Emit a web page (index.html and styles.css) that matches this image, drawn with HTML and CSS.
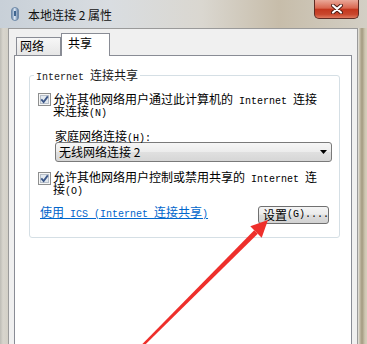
FILE: index.html
```html
<!DOCTYPE html>
<html lang="zh-CN">
<head>
<meta charset="utf-8">
<title>本地连接 2 属性</title>
<link rel="stylesheet" href="styles.css">
</head>
<body>
<div class="window">
  <div class="titlebar">
    <svg class="ticon" width="8" height="14" viewBox="0 0 8 14">
      <defs>
        <linearGradient id="tg" x1="0" x2="1" y1="0" y2="0">
          <stop offset="0" stop-color="#5d7fa6"/>
          <stop offset="0.45" stop-color="#dfe9f5"/>
          <stop offset="1" stop-color="#4d6e95"/>
        </linearGradient>
      </defs>
      <rect x="0.5" y="0.5" width="7" height="13" rx="3.5" fill="url(#tg)" stroke="#6f8aa8"/>
      <rect x="3" y="4" width="2" height="5" fill="#3f6590"/>
    </svg>
    <span class="title">本地连接 2 属性</span>
    <div class="close">
      <svg width="12" height="10" viewBox="0 0 12 10">
        <path d="M2 1.5 L10 8.5 M10 1.5 L2 8.5" stroke="#4a1a12" stroke-width="4" stroke-linecap="round"/>
        <path d="M2 1.5 L10 8.5 M10 1.5 L2 8.5" stroke="#ffffff" stroke-width="2.2" stroke-linecap="round"/>
      </svg>
    </div>
  </div>
  <div class="frame">
    <div class="client">
      <div class="tabs">
        <div class="tab">网络</div>
        <div class="tab active">共享</div>
      </div>
      <div class="panel">
        <div class="group">
          <div class="legend"><span class="m">Internet </span>连接共享</div>
          <div class="check-row">
            <svg class="cb" width="13" height="13" viewBox="0 0 13 13">
              <rect x="0.5" y="0.5" width="12" height="12" fill="#f6f6f6" stroke="#8e8f8f"/>
              <rect x="2.5" y="2.5" width="8" height="8" fill="#e3e9ef" stroke="#b7bfc9"/>
              <path d="M3.3 6.3 L5.6 9 L9.8 3.4" fill="none" stroke="#3b5688" stroke-width="1.8"/>
            </svg>
            <div class="label">允许其他网络用户通过此计算机的<span class="m"> Internet </span>连接<br>来连接<span class="m">(N)</span></div>
          </div>
          <div class="field-label">家庭网络连接<span class="m">(H):</span></div>
          <div class="combo">
            <span>无线网络连接 2</span>
            <svg class="carrow" width="7" height="4" viewBox="0 0 7 4"><path d="M0 0 H7 L3.5 4 Z" fill="#000"/></svg>
          </div>
          <div class="check-row second">
            <svg class="cb" width="13" height="13" viewBox="0 0 13 13">
              <rect x="0.5" y="0.5" width="12" height="12" fill="#f6f6f6" stroke="#8e8f8f"/>
              <rect x="2.5" y="2.5" width="8" height="8" fill="#e3e9ef" stroke="#b7bfc9"/>
              <path d="M3.3 6.3 L5.6 9 L9.8 3.4" fill="none" stroke="#3b5688" stroke-width="1.8"/>
            </svg>
            <div class="label">允许其他网络用户控制或禁用共享的<span class="m"> Internet </span>连<br>接<span class="m">(O)</span></div>
          </div>
          <div class="action-row">
            <a class="link" href="#">使用<span class="m"> ICS (Internet </span>连接共享<span class="m">)</span></a>
            <div class="btn">设置<span class="m">(G)....</span></div>
          </div>
        </div>
      </div>
    </div>
  </div>
  <svg class="arrow" width="367" height="344" viewBox="0 0 367 344">
    <polygon points="141.2,345.2 142.9,346.9 257.8,233.8 254.2,230.2" fill="#ee2f2b"/>
    <polygon points="268,220 250.3,226.3 261.7,237.7" fill="#ee2f2b"/>
  </svg>
</div>
</body>
</html>
```
FILE: styles.css
```css
* { box-sizing: border-box; }
html, body { margin: 0; padding: 0; }
body {
  width: 367px;
  height: 344px;
  overflow: hidden;
  font-family: "Noto Sans CJK SC", "Noto Sans", sans-serif;
  font-size: 12px;
  line-height: 12px;
  color: #000;
}
.m {
  font-family: "Liberation Mono", monospace;
  font-size: 10px;
  line-height: 0;
  white-space: pre;
}
.window {
  position: relative;
  width: 367px;
  height: 344px;
  display: flex;
  flex-direction: column;
  overflow: hidden;
  background: #d4d1c8;
}
.titlebar {
  height: 28px;
  flex: none;
  display: flex;
  align-items: flex-start;
  background: linear-gradient(90deg, #c8d0d8 0%, #d9dde1 30%, #dad7d0 55%, #c7bdaa 76%, #d3cfc5 100%);
}
.ticon { margin: 7px 0 0 11px; flex: none; }
.title {
  margin: 9px 0 0 9px;
  color: #111;
  white-space: nowrap;
}
.close {
  margin-left: auto;
  margin-right: 8px;
  width: 45px;
  height: 19px;
  border: 1px solid #5e2b23;
  border-top: none;
  border-radius: 0 0 5px 5px;
  background: linear-gradient(#eaa898, #d9664f 45%, #c3371e 52%, #c9472d 80%, #de7a5f);
  display: flex;
  align-items: center;
  justify-content: center;
}
.frame {
  flex: 1;
  display: flex;
  padding: 0 9px 0 8px;
  background: linear-gradient(90deg, #bdbcb5 0px, #d8d5cd 3px, #d4d1c8 7px, #d4d1c8 calc(100% - 9px), #e6e5e1 calc(100% - 9px), #c2baa4 calc(100% - 7px), #a39a80 calc(100% - 5px), #cfc7b2 calc(100% - 2px), #d6cfbc 100%);
}
.client {
  flex: 1;
  display: flex;
  flex-direction: column;
  background: #f0f0f0;
  border: 1px solid #9a9a9a;
  border-bottom: none;
  padding: 4px 5px 0 5px;
}
.tabs {
  height: 22px;
  flex: none;
  display: flex;
  align-items: flex-end;
  margin-left: 2px;
}
.tab {
  width: 45px;
  height: 18px;
  border: 1px solid #898c95;
  border-bottom: none;
  padding: 2px 0 0 3px;
  background: linear-gradient(#f7f7f7, #e6e6e6);
}
.tab.active {
  width: 49px;
  height: 23px;
  margin-bottom: -1px;
  padding: 3px 0 0 6px;
  background: #fff;
  position: relative;
  z-index: 1;
}
.panel {
  flex: 1;
  background: #fff;
  border: 1px solid #898c95;
  border-bottom: none;
  padding: 19px 11px 0 14px;
}
.group {
  position: relative;
  border: 1px solid #d5dfe5;
  border-radius: 3px;
  padding: 17px 0 13px 8px;
}
.legend {
  position: absolute;
  top: -7px;
  left: 4px;
  padding: 0 2px;
  background: #fff;
  color: #1a1a1a;
  white-space: nowrap;
}
.check-row {
  display: flex;
  align-items: flex-start;
  gap: 2px;
}
.cb { flex: none; }
.check-row.second { margin-top: 9px; }
.check-row.second .cb { margin-top: 1px; }
.label { white-space: nowrap; }
.field-label {
  margin: 13px 0 0 17px;
  white-space: nowrap;
}
.combo {
  margin-left: 17px;
  width: 277px;
  height: 20px;
  border: 1px solid #7a7a7a;
  border-radius: 3px;
  background: linear-gradient(#f6f6f6, #ececec 50%, #e0e0e0 51%, #d6d6d6);
  display: flex;
  align-items: center;
  padding: 0 4px 0 3px;
}
.carrow { margin-left: auto; }
.action-row {
  margin-top: 11px;
  display: flex;
  align-items: flex-start;
}
.link {
  margin-left: 2px;
  color: #0066cc;
  text-decoration: underline;
  white-space: nowrap;
}
.btn {
  margin-left: auto;
  margin-right: 10px;
  width: 71px;
  height: 18px;
  border: 1px solid #707070;
  border-radius: 3px;
  background: linear-gradient(#f4f4f4, #ececec 45%, #dedede 50%, #d2d2d2);
  display: flex;
  align-items: center;
  padding-left: 4px;
  white-space: nowrap;
}
.arrow {
  position: absolute;
  left: 0;
  top: 0;
  pointer-events: none;
  z-index: 5;
}
```
